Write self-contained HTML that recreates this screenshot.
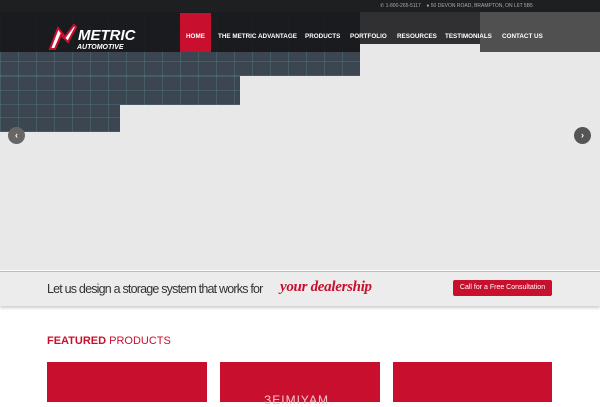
<!DOCTYPE html><html><head><style>
*{margin:0;padding:0;box-sizing:border-box}
body{width:600px;height:400px;overflow:hidden;background:#fff;font-family:"Liberation Sans",sans-serif;position:relative}
.a{position:absolute}
.bp{background:#3b4650;background-image:repeating-linear-gradient(0deg,rgba(110,180,190,.2) 0 1px,transparent 1px 14px),repeating-linear-gradient(90deg,rgba(110,180,190,.2) 0 1px,transparent 1px 18px)}
.nav{color:#fff;font-weight:bold;font-size:6.3px;top:33px}
</style></head><body>
<div class="a" style="left:0;top:0;width:600px;height:270px;background:#e8e8e8"></div>
<div class="a bp" style="left:0;top:0;width:360px;height:76px"></div>
<div class="a bp" style="left:0;top:76px;width:240px;height:29px"></div>
<div class="a bp" style="left:0;top:105px;width:120px;height:27px"></div>
<div class="a" style="left:480px;top:10px;width:120px;height:42px;background:#505050"></div>
<div class="a" style="left:0;top:0;width:600px;height:12px;background:#1e1f20"></div>
<div class="a" style="left:0;top:12px;width:360px;height:40px;background:rgba(22,22,24,.88)"></div>
<div class="a" style="left:360px;top:12px;width:120px;height:32px;background:rgba(22,22,24,.88)"></div>
<div class="a" style="left:380px;top:3px;font-size:5px;color:#aaa">&#9990; 1-800-265-5117 &nbsp;&nbsp; &#9679; 50 DEVON ROAD, BRAMPTON, ON L6T 5B5</div>
<svg class="a" style="left:48px;top:22px" width="30" height="32"><path d="M2 27 L10 6 L17 15 L26 3 L28 5 L20 20 L13 13 L7 27Z" fill="#fff" stroke="#c8102e" stroke-width="2"/></svg>
<div class="a" style="left:78px;top:29px;color:#fff;font-weight:bold;font-style:italic;font-size:15px;line-height:14px">METRIC</div>
<div class="a" style="left:77px;top:44px;color:#fff;font-weight:bold;font-style:italic;font-size:7px">AUTOMOTIVE</div>
<div class="a" style="left:180px;top:13px;width:31px;height:39px;background:#c8102e"></div>
<div class="a nav" style="left:186px">HOME</div>
<div class="a nav" style="left:218px">THE METRIC ADVANTAGE</div>
<div class="a nav" style="left:305px">PRODUCTS</div>
<div class="a nav" style="left:350px">PORTFOLIO</div>
<div class="a nav" style="left:397px">RESOURCES</div>
<div class="a nav" style="left:445px">TESTIMONIALS</div>
<div class="a nav" style="left:502px">CONTACT US</div>
<div class="a" style="left:8px;top:127px;width:17px;height:17px;border-radius:50%;background:#666;color:#fff;font-size:9px;text-align:center;line-height:17px;font-weight:bold">&#8249;</div>
<div class="a" style="left:574px;top:127px;width:17px;height:17px;border-radius:50%;background:#555;color:#fff;font-size:9px;text-align:center;line-height:17px;font-weight:bold">&#8250;</div>
<div class="a" style="left:0;top:271px;width:600px;height:35px;background:#ececec;border-top:1px solid #bbb;box-shadow:0 2px 3px rgba(0,0,0,.2)"></div>
<div class="a" style="left:47px;top:282px;font-size:12.5px;color:#333;letter-spacing:-.8px">Let us design a storage system that works for</div>
<div class="a" style="left:280px;top:279px;font-size:15px;color:#c8102e;font-style:italic;font-family:'Liberation Serif',serif;font-weight:bold;letter-spacing:-.3px">your dealership</div>
<div class="a" style="left:453px;top:280px;width:99px;height:16px;background:#c8102e;border-radius:2px;color:#fff;font-size:7px;text-align:center;line-height:16px">Call for a Free Consultation</div>
<div class="a" style="left:47px;top:335px;font-size:11px;color:#c8102e"><b>FEATURED</b> PRODUCTS</div>
<div class="a" style="left:47px;top:362px;width:160px;height:40px;background:#c8102e"></div>
<div class="a" style="left:220px;top:362px;width:160px;height:40px;background:#c8102e"></div>
<div class="a" style="left:393px;top:362px;width:159px;height:40px;background:#c8102e"></div>
<div class="a" style="left:264px;top:393px;font-size:12px;color:#f4c4cc;letter-spacing:1px">ЗЕIMIYAM</div>
</body></html>
